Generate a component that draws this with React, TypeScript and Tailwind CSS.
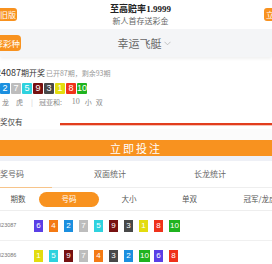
import React from 'react';

const BALL: Record<number, string> = {
  1: 'bg-[#e3dc0e]',
  2: 'bg-[#1b8fdf]',
  3: 'bg-[#484848]',
  4: 'bg-[#f47a14]',
  5: 'bg-[#2ed2de]',
  6: 'bg-[#5a3fe6]',
  7: 'bg-[#bdbdbd]',
  8: 'bg-[#ef321b]',
  9: 'bg-[#771111]',
  10: 'bg-[#1fb31f]',
};

const latest = [6, 4, 2, 7, 5, 9, 3, 1, 8, 10];

const history = [
  { issue: '2023087', nums: [6, 4, 2, 7, 5, 9, 3, 1, 8, 10] },
  { issue: '2023086', nums: [1, 5, 9, 7, 4, 3, 2, 10, 6, 8] },
];

const Chevron: React.FC = () => (
  <svg width="7" height="5" viewBox="0 0 7 5" className="ml-[2px]">
    <polyline points="0.5,0.8 3.5,3.8 6.5,0.8" fill="none" stroke="#b5b5b5" strokeWidth="0.8" />
  </svg>
);

const App: React.FC = () => {
  return (
    <div className="h-[264px] w-[272px] overflow-hidden bg-white font-['Noto_Sans_CJK_SC','Noto_Sans',sans-serif]">
      {/* top bar */}
      <div className="flex h-[29px] items-center">
        <div className="-ml-[6px] flex h-[13px] w-[23px] shrink-0 items-center justify-end rounded-[3px] bg-[#f8921f] pr-[1px] text-[8px] leading-none text-white">
          旧版
        </div>
        <div className="flex flex-1 flex-col items-center">
          <div className="text-[9px] font-bold leading-[11px] text-[#222]">
            至高赔率<span className="font-['Liberation_Serif',serif]">1.9999</span>
          </div>
          <div className="mt-[1px] text-[8px] leading-[10px] text-[#666]">新人首存送彩金</div>
        </div>
        <div className="-mr-[32px] flex h-[13px] w-[40px] shrink-0 items-center rounded-[3px] bg-[#f8921f] pl-[2px] text-[8px] leading-none text-white">
          立即注册
        </div>
      </div>

      {/* lottery selector */}
      <div className="flex h-[28px] items-center bg-[#f4f5f7] shadow-[0_2px_3px_rgba(0,0,0,0.06)]">
        <div className="-ml-[24px] flex h-[16px] w-[45px] shrink-0 items-center justify-end rounded-[4px] bg-[#f8921f] pr-[1px] text-[8.5px] leading-none text-white">
          选择彩种
        </div>
        <div className="flex flex-1 items-center justify-center pr-[5px]">
          <span className="text-[11px] leading-none text-[#666]">幸运飞艇</span>
          <Chevron />
        </div>
      </div>

      {/* latest draw */}
      <div className="pt-[10px]">
        <div className="-ml-[23px] flex items-baseline whitespace-nowrap leading-[12px] text-[#333]">
          <span className="text-[9px]">第2024087</span>
          <span className="text-[8px]">期开奖</span>
          <span className="ml-[1px] text-[7px] text-[#999]">已开87期，剩余93期</span>
        </div>
        <div className="-ml-[22px] mt-[4px] flex gap-[1px]">
          {latest.map((n, i) => (
            <span
              key={i}
              className={`${BALL[n]} flex h-[11px] w-[10px] shrink-0 items-center justify-center rounded-[1px] font-['Liberation_Sans',sans-serif] text-[9px] leading-none text-white`}
            >
              {n}
            </span>
          ))}
        </div>
        <div className="mt-[3px] flex items-center whitespace-nowrap text-[7px] leading-[10px] text-[#888]">
          <span className="ml-[2px]">龙</span>
          <span className="ml-[7px]">虎</span>
          <span className="ml-[8px] text-[#ccc]">|</span>
          <span className="ml-[6px]">冠亚和:</span>
          <span className="ml-[10px] font-['Liberation_Serif',serif] text-[8px]">10</span>
          <span className="ml-[5px]">小</span>
          <span className="ml-[4px]">双</span>
        </div>
        <div className="mt-[8px] flex h-[14px] items-center">
          <span className="-ml-[15px] whitespace-nowrap text-[7.5px] text-[#444]">距开奖仅有</span>
          <div className="ml-auto mt-[4px] w-[212px]">
            <div className="h-[2px] bg-[#e23d1e]" />
            <div className="h-[1px] bg-[#f7c3b6]" />
          </div>
        </div>
      </div>

      {/* bet button */}
      <div className="bg-[#fbfbfb] pt-[11px]">
        <button className="flex h-[16px] w-full items-center justify-center bg-[#f8921f] text-[11px] leading-none tracking-[2px] text-white">
          立即投注
        </button>
      </div>
      <div className="h-[5px] bg-[#eef0f6]" />

      {/* tabs */}
      <div className="flex h-[27px] items-stretch border-b border-[#eeeeee] text-[8px] text-[#666]">
        <div className="-mb-[1px] -ml-[44px] flex w-[96px] shrink-0 items-center justify-center border-b border-[#f7c48a] pl-[8px]">
          开奖号码
        </div>
        <div className="flex w-[116px] shrink-0 items-center justify-center">双面统计</div>
        <div className="flex w-[84px] shrink-0 items-center justify-center">长龙统计</div>
      </div>

      {/* filter */}
      <div className="flex h-[23px] items-center border-b border-[#eeeeee] text-[7.5px] text-[#555]">
        <div className="w-[36px] shrink-0 text-center">期数</div>
        <div className="ml-[3px] flex h-[15px] w-[60px] shrink-0 items-center justify-center rounded-full bg-[#f8921f] text-white">
          号码
        </div>
        <div className="w-[60px] shrink-0 text-center">大小</div>
        <div className="w-[61px] shrink-0 text-center">单双</div>
        <div className="w-[80px] shrink-0 whitespace-nowrap text-center">冠军/龙虎</div>
      </div>

      {/* history */}
      {history.map((row) => (
        <div key={row.issue} className="flex h-[30px] items-center border-b border-[#f0f0f0]">
          <div className="-ml-[5px] w-[39px] shrink-0 whitespace-nowrap font-['Liberation_Sans',sans-serif] text-[5.5px] text-[#777]">
            {row.issue}
          </div>
          <div className="flex">
            {row.nums.map((n, i) => (
              <div key={i} className="w-[15px] shrink-0">
                <span
                  className={`${BALL[n]} flex h-[12px] min-w-[9px] items-center justify-center px-[1px] font-['Liberation_Sans',sans-serif] text-[8px] leading-none text-white ${n === 10 ? 'w-[11px]' : 'w-[9px]'}`}
                >
                  {n}
                </span>
              </div>
            ))}
          </div>
        </div>
      ))}
    </div>
  );
};

export default App;
